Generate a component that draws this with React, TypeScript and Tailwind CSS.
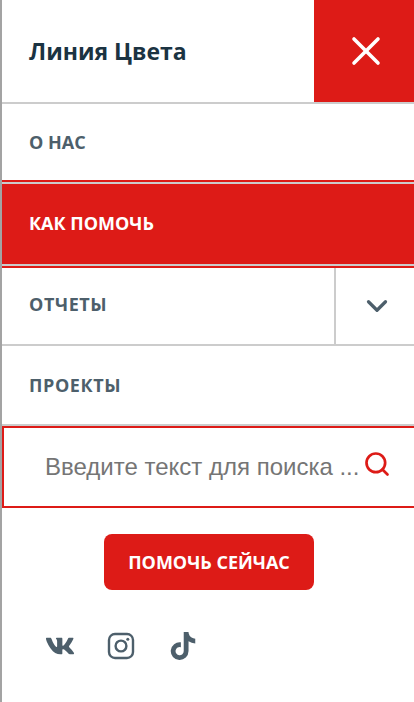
import { ChevronDown, Search, X } from "lucide-react"
import { FaVk, FaTiktok } from "react-icons/fa"

const font = "font-['Open_Sans','Liberation_Sans',sans-serif]"

export default function App() {
  return (
    <div className={`h-[702px] w-[414px] overflow-hidden border-l-2 border-[#a3a3a3] bg-white ${font}`}>
      <div className="flex h-[104px] border-b-2 border-[#cccccc]">
        <div className="flex flex-1 items-center pl-[27px] text-[23px] font-bold text-[#1b3342]">Линия Цвета</div>
        <div className="flex w-[100px] items-center justify-center bg-[#dd1b17] pl-[4px] text-white">
          <X size={48} strokeWidth={1.8} />
        </div>
      </div>

      <div className="flex h-[76px] items-center pl-[27px] text-[18px] font-bold text-[#4d5f6b]">О НАС</div>

      <div className="border-y-2 border-[#dd1b17]">
        <div className="flex h-[84px] items-center border-y-2 border-[#cccccc] bg-[#dd1b17] pb-[2px] pl-[27px] text-[18px] font-bold text-white">
          КАК ПОМОЧЬ
        </div>
      </div>

      <div className="flex h-[78px] border-b-2 border-[#cccccc]">
        <div className="flex flex-1 items-center pb-[4px] pl-[27px] text-[18px] font-bold tracking-[0.6px] text-[#4d5f6b]">ОТЧЕТЫ</div>
        <div className="flex w-[80px] items-center justify-center border-l-2 border-[#cccccc] pl-[4px] text-[#4d5f6b]">
          <ChevronDown size={34} strokeWidth={2.3} />
        </div>
      </div>

      <div className="flex h-[80px] items-center border-b-2 border-[#cccccc] pl-[27px] text-[18px] font-bold tracking-[0.6px] text-[#4d5f6b]">ПРОЕКТЫ</div>

      <div className="flex h-[82px] items-center border-2 border-r-0 border-[#dd1b17] pl-[41px] font-['Liberation_Sans',sans-serif]">
        <span className="text-[24px] leading-none whitespace-nowrap text-[#757575]">Введите текст для поиска ...</span>
        <Search size={28} strokeWidth={2.3} className="mb-[6px] ml-[4px] shrink-0 text-[#dd1b17]" />
      </div>

      <div className="flex justify-center pt-[26px] pl-[2px]">
        <button className="flex h-[56px] w-[210px] items-center justify-center rounded-[8px] bg-[#dd1b17] text-[18px] font-bold text-white">
          ПОМОЧЬ СЕЙЧАС
        </button>
      </div>

      <div className="flex items-center gap-[32px] pt-[41px] pl-[43px] text-[#4d5f6b]">
        <FaVk size={30} />
        <svg width="28" height="28" viewBox="0 0 28 28" fill="none" stroke="currentColor" strokeWidth="2.4">
          <rect x="2" y="2" width="24" height="24" rx="6" />
          <circle cx="14" cy="14" r="5.4" />
          <circle cx="20.8" cy="7.2" r="1.5" fill="currentColor" stroke="none" />
        </svg>
        <FaTiktok size={28} className="ml-[2px]" />
      </div>
    </div>
  )
}
